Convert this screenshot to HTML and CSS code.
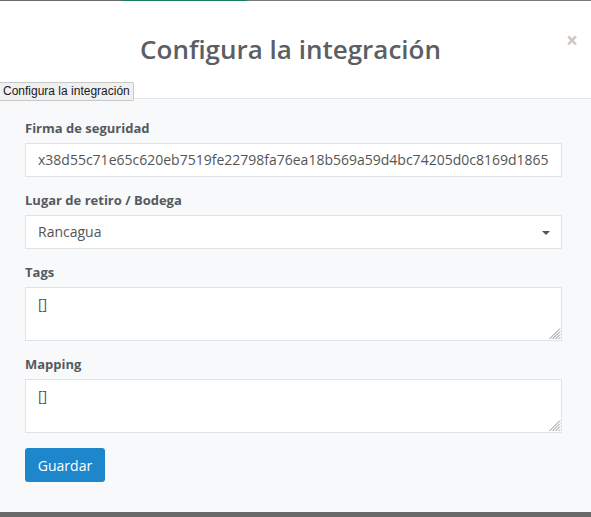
FILE: index.html
```html
<!DOCTYPE html>
<html lang="es">
<head>
<meta charset="utf-8">
<title>Configura la integración</title>
<link rel="stylesheet" href="styles.css">
</head>
<body>
<div class="topstrip"><span class="seg-a"></span><span class="seg-g"></span><span class="seg-b"></span></div>
<div class="modal">
  <div class="modal-header">
    <h2 class="modal-title">Configura la integración</h2>
    <span class="close">×</span>
    <div class="tooltip">Configura la integración</div>
  </div>
  <form class="modal-body">
    <div class="group">
      <label class="label">Firma de seguridad</label>
      <div class="control">x38d55c71e65c620eb7519fe22798fa76ea18b569a59d4bc74205d0c8169d1865</div>
    </div>
    <div class="group">
      <label class="label">Lugar de retiro / Bodega</label>
      <div class="control select">Rancagua<span class="caret"></span></div>
    </div>
    <div class="group">
      <label class="label">Tags</label>
      <div class="control area">[]<svg class="grip" width="13" height="13" viewBox="0 0 13 13"><path d="M12 1.5 L1.5 12 M12 4.5 L4.5 12 M12 7.5 L7.5 12 M12 10.5 L10.5 12" stroke="#8a8a8a" stroke-width="1" fill="none"/></svg></div>
    </div>
    <div class="group">
      <label class="label">Mapping</label>
      <div class="control area">[]<svg class="grip" width="13" height="13" viewBox="0 0 13 13"><path d="M12 1.5 L1.5 12 M12 4.5 L4.5 12 M12 7.5 L7.5 12 M12 10.5 L10.5 12" stroke="#8a8a8a" stroke-width="1" fill="none"/></svg></div>
    </div>
    <button type="button" class="btn">Guardar</button>
  </form>
</div>
<div class="bottombar"></div>
</body>
</html>
```
FILE: styles.css
```css
html, body {
  margin: 0;
  padding: 0;
}
body {
  width: 591px;
  height: 517px;
  overflow: hidden;
  font-family: "Open Sans", "Noto Sans", sans-serif;
  background: #f8f9fb;
  display: flex;
  flex-direction: column;
}
.topstrip {
  height: 1px;
  display: flex;
  background: #7a7a7a;
  flex: none;
}
.seg-a { width: 122px; background: #6a6a6a; }
.seg-g { width: 125px; background: #1d7a5c; }
.seg-b { flex: 1; }

.modal {
  flex: 1;
  display: flex;
  flex-direction: column;
}
.modal-header {
  position: relative;
  height: 97px;
  background: #fff;
  border-bottom: 1px solid #e6e6e6;
  display: flex;
  align-items: center;
  padding: 0 13px 0 15px;
  flex: none;
}
.modal-title {
  flex: 1;
  margin: 0;
  text-align: center;
  font-size: 26px;
  font-weight: 600;
  color: #5b5f63;
  padding-bottom: 2px;
}
.close {
  align-self: flex-start;
  margin-top: 29px;
  font-size: 21px;
  font-weight: 700;
  line-height: 1;
  color: #c8c8c8;
  width: 12px;
}
.tooltip {
  position: absolute;
  left: 0;
  top: 81px;
  height: 17px;
  padding: 0 3px 0 3px;
  background: #f0f0f0;
  border: 1px solid #c8c8c8;
  border-left: none;
  font-family: "Liberation Sans", Arial, sans-serif;
  font-size: 12px;
  line-height: 17px;
  color: #1a1a1a;
  border-radius: 0 2px 2px 0;
}

.modal-body {
  flex: 1;
  margin: 0;
  padding: 21px 29px 0 25px;
  display: flex;
  flex-direction: column;
  gap: 15px;
}
.group {
  display: flex;
  flex-direction: column;
}
.label {
  font-size: 13px;
  font-weight: 700;
  color: #555a5e;
  line-height: 17px;
  margin-bottom: 6px;
}
.control {
  position: relative;
  box-sizing: border-box;
  height: 34px;
  background: #fff;
  border: 1px solid #e1e3e5;
  padding: 0 12px;
  font-size: 14px;
  line-height: 32px;
  color: #555;
  white-space: nowrap;
}
.select .caret {
  position: absolute;
  right: 11px;
  top: 15px;
  width: 0;
  height: 0;
  border-left: 4px solid transparent;
  border-right: 4px solid transparent;
  border-top: 4px solid #555;
}
.area {
  height: 54px;
  line-height: 20px;
  padding-top: 6px;
}
.grip {
  position: absolute;
  right: 0;
  bottom: 0;
}
.btn {
  align-self: flex-start;
  width: 80px;
  height: 34px;
  border: none;
  border-radius: 3px;
  background: #1e86ca;
  color: #fff;
  font-family: "Open Sans", "Noto Sans", sans-serif;
  font-size: 14px;
  padding: 0;
}
.bottombar {
  height: 5px;
  background: #686868;
  flex: none;
}
```
